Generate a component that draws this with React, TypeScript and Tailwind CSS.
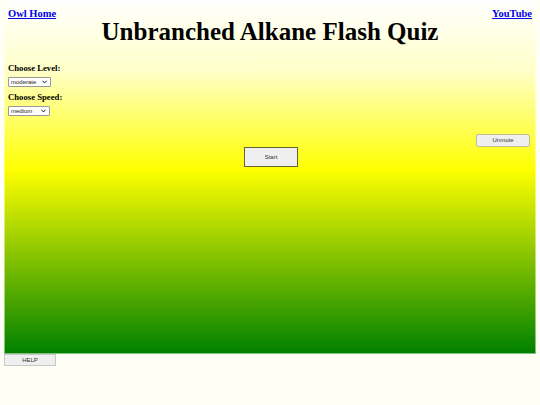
import React from "react";

function Select({ value, options, width }: { value: string; options: string[]; width: string }) {
  return (
    <div className={`relative ${width} h-[10px]`}>
      <select
        defaultValue={value}
        className="block appearance-none w-full h-full text-[6px] leading-none border border-[#999] bg-white rounded-[1px] pl-[2px] py-0 text-[#222]"
        style={{ fontFamily: '"Liberation Sans", Arial, sans-serif' }}
      >
        {options.map((o) => (
          <option key={o}>{o}</option>
        ))}
      </select>
      <svg
        className="absolute right-[4px] top-[3px] pointer-events-none"
        width="5"
        height="4"
        viewBox="0 0 5 4"
      >
        <path d="M0.5 0.8 L2.5 3 L4.5 0.8" fill="none" stroke="#222" strokeWidth="1" />
      </svg>
    </div>
  );
}

export default function App() {
  const serif = { fontFamily: '"Liberation Serif", "Times New Roman", serif' };
  const sans = { fontFamily: '"Liberation Sans", Arial, sans-serif' };
  return (
    <div className="w-[540px] h-[405px] bg-[#fffff5] overflow-hidden flex flex-col" style={serif}>
      <div className="mx-[4px] h-[354px] shrink-0 border border-[rgba(255,255,255,0.5)] bg-origin-border bg-[linear-gradient(to_bottom,#ffffff_0%,#ffffc8_20%,#ffff00_48%,#008000_100%)] flex flex-col">
        <div className="flex justify-between px-[3px] pt-[8px] text-[10.5px] font-bold leading-none">
          <a href="#" className="text-[#0000ee] underline">Owl Home</a>
          <a href="#" className="text-[#0000ee] underline">YouTube</a>
        </div>
        <h1 className="text-center text-[25px] font-bold leading-none text-black -mt-[1px]">
          Unbranched Alkane Flash Quiz
        </h1>
        <div className="px-[3px] mt-[20px] flex flex-col items-start">
          <div className="text-[8.7px] font-bold leading-none">Choose Level:</div>
          <div className="mt-[5px]">
            <Select value="moderate" options={["easy", "moderate", "hard"]} width="w-[43px]" />
          </div>
          <div className="text-[8.7px] font-bold leading-none mt-[6px]">Choose Speed:</div>
          <div className="mt-[4px]">
            <Select value="medium" options={["slow", "medium", "fast"]} width="w-[42px]" />
          </div>
        </div>
        <div className="flex justify-end pr-[5px] mt-[18px]">
          <button
            className="w-[54px] h-[13px] bg-[#efefef] border border-[#c0c090] rounded-[2px] text-[6px] leading-none text-[#333]"
            style={sans}
          >
            Unmute
          </button>
        </div>
        <div className="flex justify-center">
          <button
            className="ml-[2px] w-[54px] h-[20px] bg-[#efefef] border border-[#666633] text-[6px] leading-none text-[#333]"
            style={sans}
          >
            Start
          </button>
        </div>
      </div>
      <div className="flex px-[4px]">
        <button
          className="w-[52px] h-[12px] bg-[#efefef] border border-[#c8c8c8] text-[6px] leading-none text-[#333]"
          style={sans}
        >
          HELP
        </button>
      </div>
    </div>
  );
}
